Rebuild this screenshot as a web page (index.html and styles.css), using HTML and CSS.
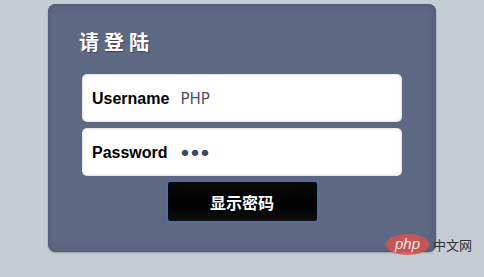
FILE: index.html
```html
<!DOCTYPE html>
<html lang="zh">
<head>
  <meta charset="UTF-8" />
  <title>请登陆</title>
  <meta name="viewport" content="width=device-width, initial-scale=1.0" />
  <link rel="stylesheet" href="styles.css">
</head>
<body>

  <div class="caja-login">
    <h2 class="titulo">请登陆</h2>

    <div class="campo">
      <label for="usuario">Username</label>
      <input type="text" id="usuario" value="PHP" />
    </div>
    <div class="campo">
      <label for="clave">Password</label>
      <input type="password" id="clave" value="123" />
    </div>

    <div class="fila-boton">
      <button id="verClave" onclick="mostrarClave()">显示密码</button>
    </div>
  </div>

  <div class="marca">
    <span class="marca-logo">php</span>
    <span class="marca-texto">中文网</span>
  </div>

  <script>
    function mostrarClave() {
      const clave = document.getElementById("clave");
      const boton = document.getElementById("verClave");
      if (clave.type === "password") {
        clave.type = "text";
        boton.textContent = "隐藏密码";
      } else {
        clave.type = "password";
        boton.textContent = "显示密码";
      }
    }
  </script>

</body>
</html>
```

FILE: styles.css
```css
body {
  margin: 0;
  padding: 0;
  background: #c6ccd3;
  font-family: "Liberation Sans", "Noto Sans CJK SC", sans-serif;
  height: 277px;
  overflow: hidden;
  position: relative;
}

.caja-login {
  width: 388px;
  height: 248px;
  margin: 4px auto 0;
  padding-top: 25px;
  box-sizing: border-box;
  background: #5d6983;
  border-radius: 8px;
  box-shadow: inset 0 0 0 2px #55607a, inset 0 0 5px 3px #56617a, 0 1px 2px rgba(0, 0, 0, 0.25);
}

.titulo {
  margin: 0 0 20px 31px;
  font-family: "Noto Sans CJK SC", sans-serif;
  font-size: 20px;
  line-height: 25px;
  font-weight: bold;
  letter-spacing: 5px;
  color: #fff;
  text-shadow: 1px 1px 1px rgba(0, 0, 0, 0.35);
}

.campo {
  width: 320px;
  height: 48px;
  margin: 0 auto 6px;
  box-sizing: border-box;
  background: #fff;
  border-radius: 5px;
  box-shadow: inset 0 0 3px rgba(0, 0, 0, 0.25);
  display: flex;
  align-items: center;
  padding: 2px 0 0 10px;
}

.campo label {
  font-weight: bold;
  font-size: 16px;
  color: #000;
  margin-right: 11px;
}

.campo input {
  flex: 1;
  border: none;
  outline: none;
  background: transparent;
  font-family: "DejaVu Sans", sans-serif;
  font-size: 15px;
  color: #4f4f6b;
  padding: 0;
  min-width: 0;
}

.campo input[type="password"] {
  color: #3c4766;
  font-size: 22px;
  letter-spacing: -3px;
}

.fila-boton {
  display: flex;
  justify-content: center;
  margin-top: -1px;
}

.fila-boton button {
  width: 151px;
  height: 41px;
  background: linear-gradient(#0a0a0a, #000 60%, #111);
  border: 1px solid #3c6fd6;
  border-radius: 3px;
  box-shadow: 0 0 2px #4a7ce0;
  color: #fff;
  font-family: "Noto Sans CJK SC", sans-serif;
  font-weight: bold;
  font-size: 16px;
  cursor: pointer;
}

.marca {
  position: absolute;
  left: 386px;
  top: 234px;
  display: flex;
  align-items: center;
  gap: 4px;
}

.marca-logo {
  width: 43px;
  height: 21px;
  border-radius: 50%;
  background: #d9534f;
  color: #fff;
  font-style: italic;
  font-size: 15px;
  line-height: 20px;
  text-align: center;
  opacity: 0.85;
}

.marca-texto {
  font-family: "Noto Sans CJK SC", sans-serif;
  font-size: 13px;
  color: #333;
}
```
